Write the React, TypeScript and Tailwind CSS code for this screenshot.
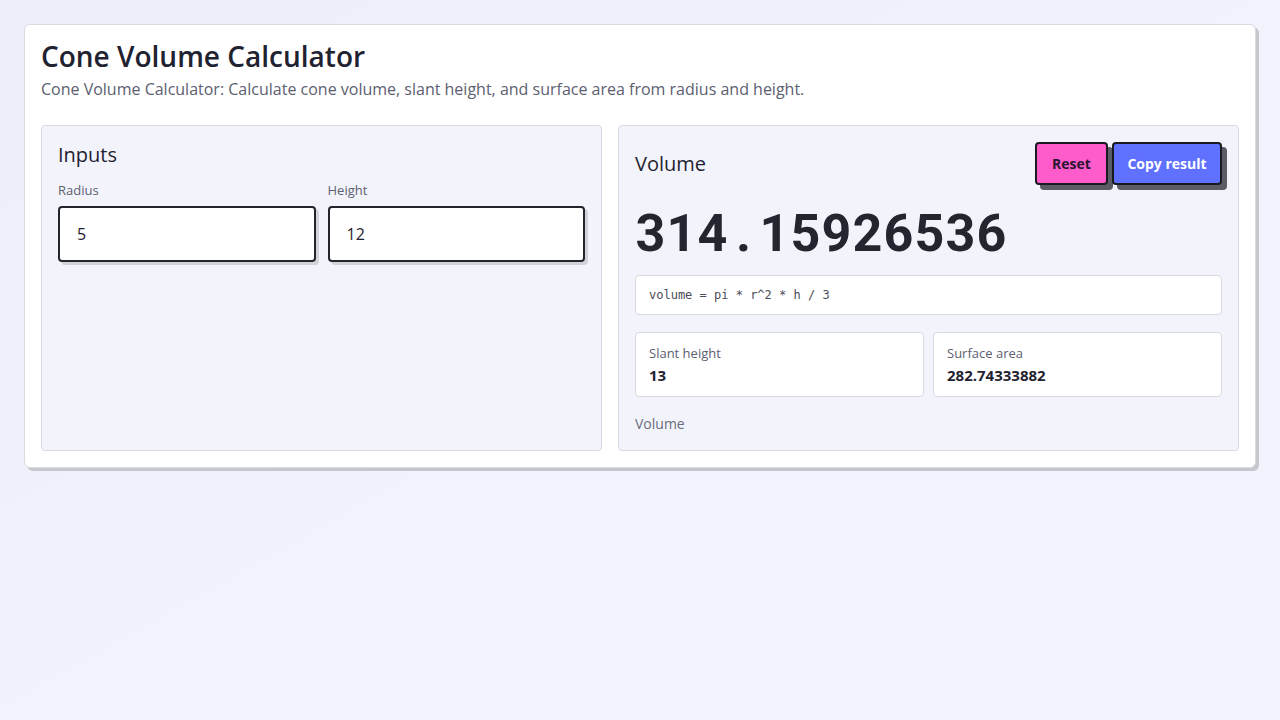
import React, { useState } from 'react';

const sans = 'font-["Open_Sans","Noto_Sans",sans-serif]';

const ConeCalculator: React.FC = () => {
  const [radius, setRadius] = useState('5');
  const [height, setHeight] = useState('12');

  const r = parseFloat(radius) || 0;
  const h = parseFloat(height) || 0;
  const volume = (Math.PI * r * r * h) / 3;
  const slant = Math.sqrt(r * r + h * h);
  const surface = Math.PI * r * (r + slant);

  const fmt = (n: number) => String(Number(n.toFixed(8)));

  const reset = () => {
    setRadius('5');
    setHeight('12');
  };

  return (
    <div className={`min-h-screen w-full bg-gradient-to-br from-[#eceef9] via-[#f1f2fb] to-[#f1f2fb] p-6 ${sans}`}>
      <div className="rounded-md border border-[#d9dbe3] bg-white px-4 pt-[13px] pb-4 shadow-[3px_3px_0_#c6c7cc]">
        <h1 className="text-[28px] font-semibold leading-[36px] text-[#1f2230]">Cone Volume Calculator</h1>
        <p className="mt-[4px] text-[16px] leading-[22px] text-[#5c6070]">
          Cone Volume Calculator: Calculate cone volume, slant height, and surface area from radius and height.
        </p>

        <div className="mt-[25px] grid grid-cols-[561px_1fr] gap-4">
          {/* inputs */}
          <section className="h-[326px] rounded border border-[#d6d9e2] bg-[#f3f4fb] px-4 pt-4">
            <h2 className="text-[20px] font-medium leading-[26px] text-[#1f2230]">Inputs</h2>
            <div className="mt-[13px] grid grid-cols-2 gap-3">
              <label className="flex flex-col">
                <span className="text-[13px] leading-[18px] text-[#5c6070]">Radius</span>
                <input
                  value={radius}
                  onChange={(e) => setRadius(e.target.value)}
                  className="mt-[7px] h-14 rounded border-2 border-[#23252d] bg-white px-[17px] text-[16px] text-[#1f2230] shadow-[3px_3px_0_#d2d3d8] outline-none"
                />
              </label>
              <label className="flex flex-col">
                <span className="text-[13px] leading-[18px] text-[#5c6070]">Height</span>
                <input
                  value={height}
                  onChange={(e) => setHeight(e.target.value)}
                  className="mt-[7px] h-14 rounded border-2 border-[#23252d] bg-white px-[17px] text-[16px] text-[#1f2230] shadow-[3px_3px_0_#d2d3d8] outline-none"
                />
              </label>
            </div>
          </section>

          {/* results */}
          <section className="h-[326px] rounded border border-[#d6d9e2] bg-[#f3f4fb] px-4 pt-4">
            <div className="flex items-center justify-between">
              <h2 className="text-[20px] font-medium leading-[26px] text-[#1f2230]">Volume</h2>
              <div className="flex gap-1">
                <button
                  onClick={reset}
                  className="h-[43px] w-[73px] rounded border-2 border-[#1a1a22] bg-[#ff5ccb] text-[14px] font-bold text-[#2a1530] shadow-[5px_5px_0_#5b5d66]"
                >
                  Reset
                </button>
                <button
                  onClick={() => navigator.clipboard?.writeText(fmt(volume))}
                  className="h-[43px] w-[110px] rounded border-2 border-[#1a1a22] bg-[#6070ff] text-[14px] font-bold text-white shadow-[5px_5px_0_#5b5d66]"
                >
                  Copy result
                </button>
              </div>
            </div>

            {/* monospaced readout: each glyph sits in a fixed 31px cell */}
            <div className="mt-[17px] flex font-['Roboto',sans-serif] text-[52px] font-bold leading-[64px] text-[#23252f]">
              {fmt(volume)
                .split('')
                .map((ch, i) => (
                  <span key={i} className="inline-block w-[31px] text-center">
                    {ch}
                  </span>
                ))}
            </div>

            <div className="mt-[9px] flex h-10 items-center rounded border border-[#d6d9e2] bg-white px-[13px] font-['DejaVu_Sans_Mono',monospace] text-[12px] text-[#4a4d58]">
              volume = pi * r^2 * h / 3
            </div>

            <div className="mt-[17px] grid grid-cols-2 gap-[9px]">
              <div className="h-[65px] rounded border border-[#d6d9e2] bg-white px-[13px] pt-[11px]">
                <div className="text-[13px] leading-[18px] text-[#5c6070]">Slant height</div>
                <div className="mt-[3px] text-[15px] font-bold leading-[20px] text-[#1f2230]">{fmt(slant)}</div>
              </div>
              <div className="h-[65px] rounded border border-[#d6d9e2] bg-white px-[13px] pt-[11px]">
                <div className="text-[13px] leading-[18px] text-[#5c6070]">Surface area</div>
                <div className="mt-[3px] text-[15px] font-bold leading-[20px] text-[#1f2230]">{fmt(surface)}</div>
              </div>
            </div>

            <div className="mt-[17px] text-[14px] leading-[20px] text-[#6a6e7c]">Volume</div>
          </section>
        </div>
      </div>
    </div>
  );
};

export default function App() {
  return <ConeCalculator />;
}
